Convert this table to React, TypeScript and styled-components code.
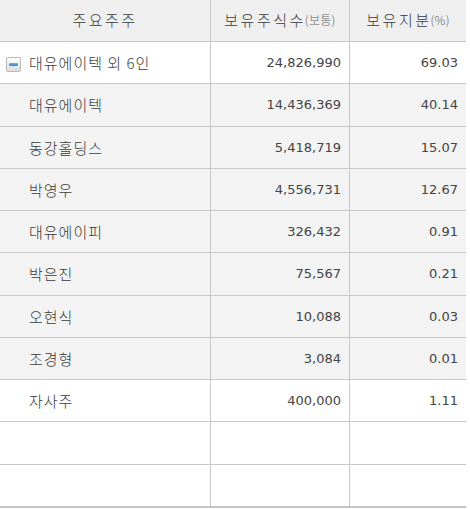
import React from 'react';
import styled, { createGlobalStyle } from 'styled-components';

const GlobalStyle = createGlobalStyle`
  html, body {
    margin: 0;
    padding: 0;
    background: #ffffff;
  }
`;

const COLS = '211px 139px 116px';
const HANGUL = `'Noto Sans CJK KR', 'Noto Sans', sans-serif`;
const DIGITS = `'DejaVu Sans', 'Noto Sans CJK KR', sans-serif`;

const Table = styled.div`
  width: 466px;
  color: #3a3a3a;
`;

const HeaderRow = styled.div`
  display: grid;
  grid-template-columns: ${COLS};
  height: 42px;
  background: #efefef;
`;

const HeadCell = styled.div<{ $last?: boolean }>`
  box-sizing: border-box;
  display: flex;
  align-items: center;
  justify-content: center;
  border-bottom: 1px solid #c8c8c8;
  border-right: ${(p) => (p.$last ? 'none' : '1px solid #c8c8c8')};
  font-family: ${HANGUL};
  font-size: 15px;
  font-weight: 300;
  letter-spacing: 2.5px;
  padding-bottom: 2px;
`;

const Unit = styled.span`
  font-size: 12px;
  letter-spacing: 0.3px;
  color: #666666;
  margin-left: -1px;
`;

const Row = styled.div<{ $shade?: boolean; $end?: boolean }>`
  display: grid;
  grid-template-columns: ${COLS};
  height: ${(p) => (p.$end ? '43.27px' : '42.27px')};
  background: ${(p) => (p.$shade ? '#f3f3f3' : '#ffffff')};
`;

const Cell = styled.div<{ $last?: boolean; $end?: boolean }>`
  box-sizing: border-box;
  display: flex;
  align-items: center;
  border-bottom: ${(p) => (p.$end ? '2px solid #c4c4c4' : '1px solid #c8c8c8')};
  border-right: ${(p) => (p.$last ? 'none' : '1px solid #c8c8c8')};
`;

const NameCell = styled(Cell)`
  padding-left: 6px;
  font-family: ${HANGUL};
  font-size: 15px;
  font-weight: 300;
  letter-spacing: 1px;
`;

const NumCell = styled(Cell)`
  justify-content: flex-end;
  padding-right: 8px;
  font-family: ${DIGITS};
  font-size: 13px;
  color: #444444;
`;

const Slot = styled.span`
  display: inline-flex;
  width: 23px;
  flex: none;
  align-items: center;
`;

const Toggle = styled.span`
  box-sizing: border-box;
  width: 15px;
  height: 15px;
  margin-top: 3px;
  border: 1px solid #b9b9b9;
  border-radius: 2px;
  background: linear-gradient(#ffffff, #dcdcdc);
  display: flex;
  align-items: center;
  justify-content: center;

  &::after {
    content: '';
    width: 9px;
    height: 3px;
    border-radius: 1px;
    background: linear-gradient(#6fb4ef, #2f7fcf);
  }
`;

type Holder = { name: string; shares: string; ratio: string; group?: boolean; shade?: boolean };

const rows: Holder[] = [
  { name: '대유에이텍 외 6인', shares: '24,826,990', ratio: '69.03', group: true },
  { name: '대유에이텍', shares: '14,436,369', ratio: '40.14', shade: true },
  { name: '동강홀딩스', shares: '5,418,719', ratio: '15.07', shade: true },
  { name: '박영우', shares: '4,556,731', ratio: '12.67', shade: true },
  { name: '대유에이피', shares: '326,432', ratio: '0.91', shade: true },
  { name: '박은진', shares: '75,567', ratio: '0.21', shade: true },
  { name: '오현식', shares: '10,088', ratio: '0.03', shade: true },
  { name: '조경형', shares: '3,084', ratio: '0.01', shade: true },
  { name: '자사주', shares: '400,000', ratio: '1.11' },
  { name: '', shares: '', ratio: '' },
  { name: '', shares: '', ratio: '' },
];

const App = () => {
  return (
    <>
      <GlobalStyle />
      <Table>
        <HeaderRow>
          <HeadCell>주요주주</HeadCell>
          <HeadCell>
            보유주식수<Unit>(보통)</Unit>
          </HeadCell>
          <HeadCell $last>
            보유지분<Unit>(%)</Unit>
          </HeadCell>
        </HeaderRow>
        {rows.map((r, i) => {
          const end = i === rows.length - 1;
          return (
            <Row key={i} $shade={r.shade} $end={end}>
              <NameCell $end={end}>
                <Slot>{r.group && <Toggle />}</Slot>
                {r.name}
              </NameCell>
              <NumCell $end={end}>{r.shares}</NumCell>
              <NumCell $end={end} $last>
                {r.ratio}
              </NumCell>
            </Row>
          );
        })}
      </Table>
    </>
  );
};

export default App;
